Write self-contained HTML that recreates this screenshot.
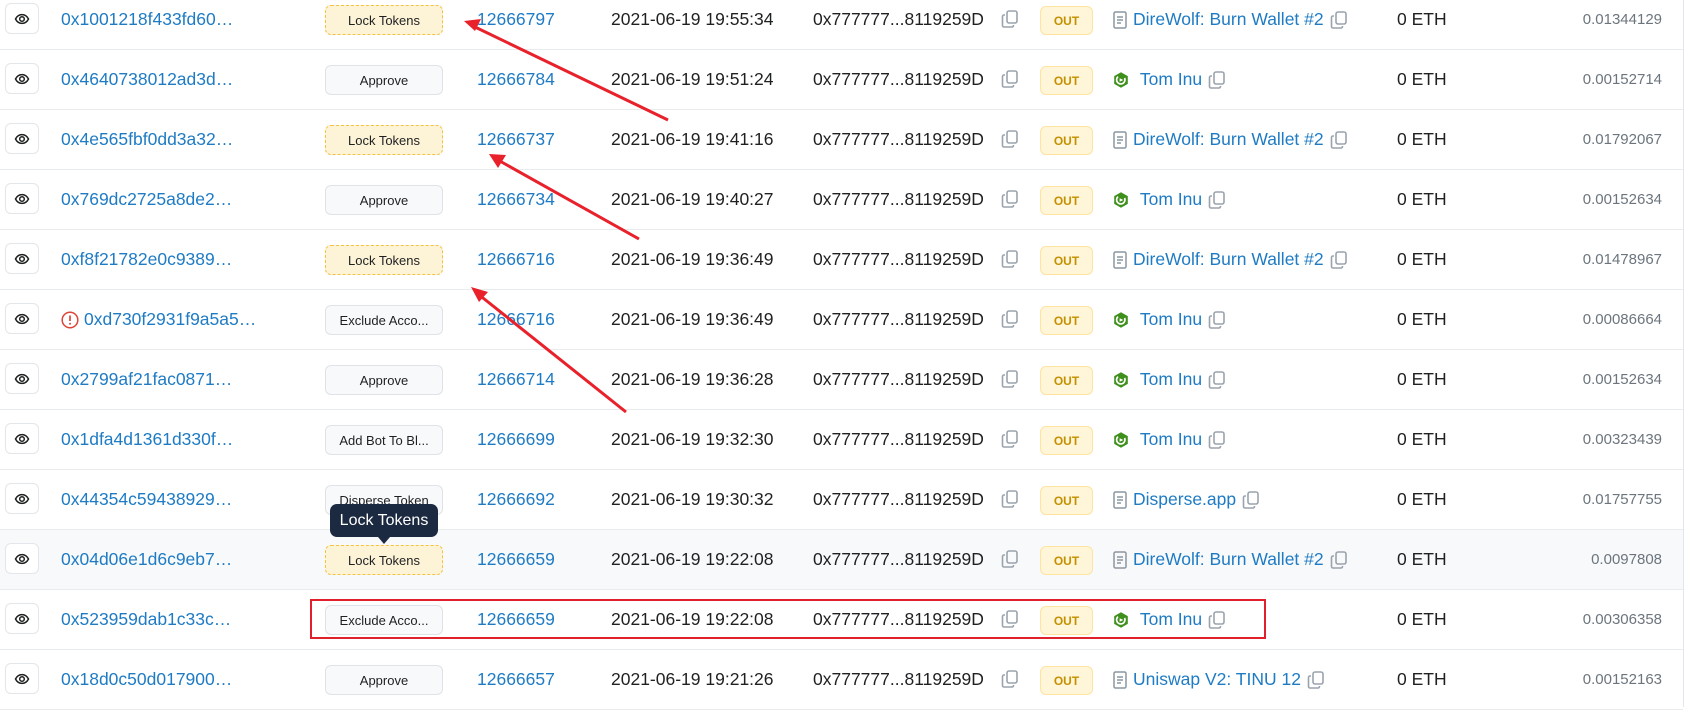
<!DOCTYPE html>
<html><head><meta charset="utf-8"><style>
*{box-sizing:border-box;margin:0;padding:0}
body{width:1687px;height:707px;overflow:hidden;background:#fff;font-family:"Liberation Sans",sans-serif;position:relative}
.r{position:absolute;left:0;width:1683px;height:60px;border-bottom:1px solid #e9ecef}
.r>*{position:absolute}
.eye{left:5px;top:13px;width:34px;height:31px;border:1px solid #e3e6ea;border-radius:6px;display:flex;align-items:center;justify-content:center}
.h{left:61px;top:19px;font-size:17.5px;color:#1e7bc4;white-space:nowrap}
.m{left:325px;top:15px;width:118px;height:30px;border:1px solid #dfe2e6;background:#f8f9fa;border-radius:6px;font-size:13px;color:#1e2022;display:flex;align-items:center;justify-content:center;white-space:nowrap;overflow:hidden}
.m.l{background:#fdf3d7;border:1px dashed #f5c242}
.b{left:477px;top:19px;font-size:17.5px;color:#1e7bc4}
.d{left:611px;top:19px;font-size:17.5px;color:#1e2022}
.f{left:813px;top:19px;font-size:17.5px;color:#1e2022}
.c{left:1001px;top:20px}
.o{left:1040px;top:16px;width:53px;height:29px;background:#fff5d9;border:1px solid #ffe3a0;border-radius:6px;font-size:12px;font-weight:bold;color:#c49000;display:flex;align-items:center;justify-content:center}
.t{left:1113px;top:19px;font-size:17.5px;color:#1e7bc4;white-space:nowrap;display:flex;align-items:center;gap:6px}
.v{left:1397px;top:19px;font-size:17.5px;color:#1e2022}
.fe{right:21px;top:21px;font-size:15px;color:#6c757d}
</style></head><body>
<svg width="0" height="0" style="position:absolute"><defs>
<symbol id="eye" viewBox="0 0 16 16"><path d="M1.5 8C3 5 5.3 3.6 8 3.6S13 5 14.5 8C13 11 10.7 12.4 8 12.4S3 11 1.5 8Z" fill="none" stroke="#1e2022" stroke-width="1.5"/><circle cx="8" cy="8" r="2.3" fill="none" stroke="#1e2022" stroke-width="1.5"/></symbol>
<symbol id="cp" viewBox="0 0 18 18"><rect x="6" y="1" width="10" height="12" rx="2" fill="none" stroke="#9aa3ad" stroke-width="1.6"/><path d="M4 5H3a1.5 1.5 0 0 0-1.5 1.5v9A1.5 1.5 0 0 0 3 17h8a1.5 1.5 0 0 0 1.5-1.5V15" fill="none" stroke="#9aa3ad" stroke-width="1.6"/></symbol>
<symbol id="doc" viewBox="0 0 14 18"><rect x="1" y="1" width="12" height="16" rx="1.5" fill="none" stroke="#8c96a0" stroke-width="1.5"/><path d="M4 6h6M4 9h6M4 12h4" stroke="#8c96a0" stroke-width="1.4"/></symbol>
<symbol id="tom" viewBox="0 0 16 16"><path d="M8 0.3L14.8 4.1V11.9L8 15.7L1.2 11.9V4.1Z" fill="#3f8f1c"/><path d="M5 4.6A4.2 4.2 0 1 0 11.6 6" fill="none" stroke="#fff" stroke-width="1.7"/><path d="M6.6 6.2L10.4 8L6.6 9.8Z" fill="#fff"/></symbol>
</defs></svg>

<div class="r" style="top:-10px"><div class="eye"><svg width="16" height="16"><use href="#eye"/></svg></div><div class="h">0x1001218f433fd60…</div><div class="m l">Lock Tokens</div><div class="b">12666797</div><div class="d">2021-06-19 19:55:34</div><div class="f">0x777777...8119259D</div><svg class="c" width="18" height="18"><use href="#cp"/></svg><div class="o">OUT</div><div class="t"><svg width="14" height="18"><use href="#doc"/></svg>DireWolf: Burn Wallet #2<svg width="18" height="18"><use href="#cp"/></svg></div><div class="v">0 ETH</div><div class="fe">0.01344129</div></div>

<div class="r" style="top:50px"><div class="eye"><svg width="16" height="16"><use href="#eye"/></svg></div><div class="h">0x4640738012ad3d…</div><div class="m">Approve</div><div class="b">12666784</div><div class="d">2021-06-19 19:51:24</div><div class="f">0x777777...8119259D</div><svg class="c" width="18" height="18"><use href="#cp"/></svg><div class="o">OUT</div><div class="t"><svg width="16" height="16"><use href="#tom"/></svg>&nbsp;Tom Inu<svg width="18" height="18"><use href="#cp"/></svg></div><div class="v">0 ETH</div><div class="fe">0.00152714</div></div>

<div class="r" style="top:110px"><div class="eye"><svg width="16" height="16"><use href="#eye"/></svg></div><div class="h">0x4e565fbf0dd3a32…</div><div class="m l">Lock Tokens</div><div class="b">12666737</div><div class="d">2021-06-19 19:41:16</div><div class="f">0x777777...8119259D</div><svg class="c" width="18" height="18"><use href="#cp"/></svg><div class="o">OUT</div><div class="t"><svg width="14" height="18"><use href="#doc"/></svg>DireWolf: Burn Wallet #2<svg width="18" height="18"><use href="#cp"/></svg></div><div class="v">0 ETH</div><div class="fe">0.01792067</div></div>

<div class="r" style="top:170px"><div class="eye"><svg width="16" height="16"><use href="#eye"/></svg></div><div class="h">0x769dc2725a8de2…</div><div class="m">Approve</div><div class="b">12666734</div><div class="d">2021-06-19 19:40:27</div><div class="f">0x777777...8119259D</div><svg class="c" width="18" height="18"><use href="#cp"/></svg><div class="o">OUT</div><div class="t"><svg width="16" height="16"><use href="#tom"/></svg>&nbsp;Tom Inu<svg width="18" height="18"><use href="#cp"/></svg></div><div class="v">0 ETH</div><div class="fe">0.00152634</div></div>

<div class="r" style="top:230px"><div class="eye"><svg width="16" height="16"><use href="#eye"/></svg></div><div class="h">0xf8f21782e0c9389…</div><div class="m l">Lock Tokens</div><div class="b">12666716</div><div class="d">2021-06-19 19:36:49</div><div class="f">0x777777...8119259D</div><svg class="c" width="18" height="18"><use href="#cp"/></svg><div class="o">OUT</div><div class="t"><svg width="14" height="18"><use href="#doc"/></svg>DireWolf: Burn Wallet #2<svg width="18" height="18"><use href="#cp"/></svg></div><div class="v">0 ETH</div><div class="fe">0.01478967</div></div>

<div class="r" style="top:290px"><div class="eye"><svg width="16" height="16"><use href="#eye"/></svg></div><div class="h" style="display:flex;align-items:center;gap:5px"><svg width="18" height="18" viewBox="0 0 18 18"><circle cx="9" cy="9" r="7.8" fill="none" stroke="#de4437" stroke-width="1.5"/><path d="M9 4.5v5.5" stroke="#de4437" stroke-width="1.7"/><circle cx="9" cy="12.8" r="1" fill="#de4437"/></svg>0xd730f2931f9a5a5…</div><div class="m">Exclude Acco...</div><div class="b">12666716</div><div class="d">2021-06-19 19:36:49</div><div class="f">0x777777...8119259D</div><svg class="c" width="18" height="18"><use href="#cp"/></svg><div class="o">OUT</div><div class="t"><svg width="16" height="16"><use href="#tom"/></svg>&nbsp;Tom Inu<svg width="18" height="18"><use href="#cp"/></svg></div><div class="v">0 ETH</div><div class="fe">0.00086664</div></div>

<div class="r" style="top:350px"><div class="eye"><svg width="16" height="16"><use href="#eye"/></svg></div><div class="h">0x2799af21fac0871…</div><div class="m">Approve</div><div class="b">12666714</div><div class="d">2021-06-19 19:36:28</div><div class="f">0x777777...8119259D</div><svg class="c" width="18" height="18"><use href="#cp"/></svg><div class="o">OUT</div><div class="t"><svg width="16" height="16"><use href="#tom"/></svg>&nbsp;Tom Inu<svg width="18" height="18"><use href="#cp"/></svg></div><div class="v">0 ETH</div><div class="fe">0.00152634</div></div>

<div class="r" style="top:410px"><div class="eye"><svg width="16" height="16"><use href="#eye"/></svg></div><div class="h">0x1dfa4d1361d330f…</div><div class="m">Add Bot To Bl...</div><div class="b">12666699</div><div class="d">2021-06-19 19:32:30</div><div class="f">0x777777...8119259D</div><svg class="c" width="18" height="18"><use href="#cp"/></svg><div class="o">OUT</div><div class="t"><svg width="16" height="16"><use href="#tom"/></svg>&nbsp;Tom Inu<svg width="18" height="18"><use href="#cp"/></svg></div><div class="v">0 ETH</div><div class="fe">0.00323439</div></div>

<div class="r" style="top:470px"><div class="eye"><svg width="16" height="16"><use href="#eye"/></svg></div><div class="h">0x44354c59438929…</div><div class="m">Disperse Token</div><div class="b">12666692</div><div class="d">2021-06-19 19:30:32</div><div class="f">0x777777...8119259D</div><svg class="c" width="18" height="18"><use href="#cp"/></svg><div class="o">OUT</div><div class="t"><svg width="14" height="18"><use href="#doc"/></svg>Disperse.app<svg width="18" height="18"><use href="#cp"/></svg></div><div class="v">0 ETH</div><div class="fe">0.01757755</div></div>

<div class="r" style="top:530px;background:#f8f9fa"><div class="eye" style="background:#fff"><svg width="16" height="16"><use href="#eye"/></svg></div><div class="h">0x04d06e1d6c9eb7…</div><div class="m l">Lock Tokens</div><div class="b">12666659</div><div class="d">2021-06-19 19:22:08</div><div class="f">0x777777...8119259D</div><svg class="c" width="18" height="18"><use href="#cp"/></svg><div class="o">OUT</div><div class="t"><svg width="14" height="18"><use href="#doc"/></svg>DireWolf: Burn Wallet #2<svg width="18" height="18"><use href="#cp"/></svg></div><div class="v">0 ETH</div><div class="fe">0.0097808</div></div>

<div class="r" style="top:590px"><div class="eye"><svg width="16" height="16"><use href="#eye"/></svg></div><div class="h">0x523959dab1c33c…</div><div class="m">Exclude Acco...</div><div class="b">12666659</div><div class="d">2021-06-19 19:22:08</div><div class="f">0x777777...8119259D</div><svg class="c" width="18" height="18"><use href="#cp"/></svg><div class="o">OUT</div><div class="t"><svg width="16" height="16"><use href="#tom"/></svg>&nbsp;Tom Inu<svg width="18" height="18"><use href="#cp"/></svg></div><div class="v">0 ETH</div><div class="fe">0.00306358</div></div>

<div class="r" style="top:650px"><div class="eye"><svg width="16" height="16"><use href="#eye"/></svg></div><div class="h">0x18d0c50d017900…</div><div class="m">Approve</div><div class="b">12666657</div><div class="d">2021-06-19 19:21:26</div><div class="f">0x777777...8119259D</div><svg class="c" width="18" height="18"><use href="#cp"/></svg><div class="o">OUT</div><div class="t"><svg width="14" height="18"><use href="#doc"/></svg>Uniswap V2: TINU 12<svg width="18" height="18"><use href="#cp"/></svg></div><div class="v">0 ETH</div><div class="fe">0.00152163</div></div>

<div style="position:absolute;left:1683px;top:0;width:1px;height:707px;background:#e3e6ea"></div>

<div style="position:absolute;left:330px;top:504px;width:108px;height:33px;background:#1b2a40;border-radius:7px;color:#fff;font-size:16px;display:flex;align-items:center;justify-content:center">Lock Tokens</div>
<div style="position:absolute;left:378px;top:537px;width:0;height:0;border-left:6px solid transparent;border-right:6px solid transparent;border-top:7px solid #1b2a40"></div>

<div style="position:absolute;left:310px;top:599px;width:956px;height:40px;border:2px solid #e0202a"></div>

<svg style="position:absolute;left:0;top:0" width="1687" height="707">
<g stroke="#e8212b" stroke-width="3" fill="#e8212b">
<line x1="668" y1="120" x2="475" y2="27"/><polygon points="464,21 481,19 475,31" stroke="none"/>
<line x1="639" y1="239" x2="498" y2="160"/><polygon points="489,154 506,155 498,168" stroke="none"/>
<line x1="626" y1="412" x2="478" y2="294"/><polygon points="471,287 488,292 479,302" stroke="none"/>
</g></svg>
</body></html>
